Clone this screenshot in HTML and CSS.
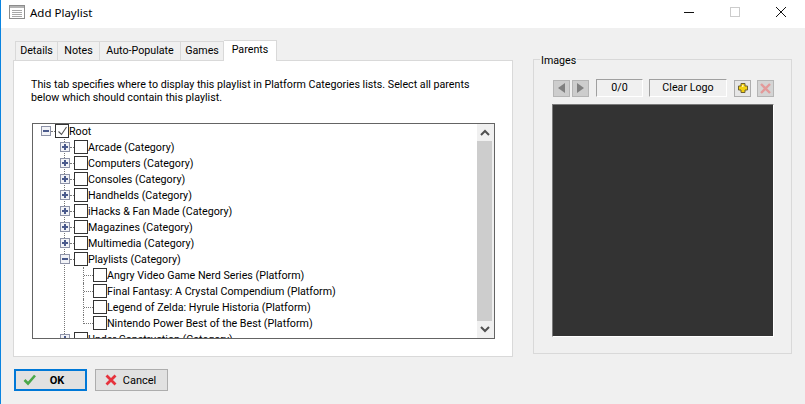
FILE: index.html
```html
<!DOCTYPE html>
<html lang="en">
<head>
<meta charset="utf-8">
<title>Add Playlist</title>
<link rel="stylesheet" href="styles.css">
</head>
<body>
<div class="window">
  <header class="titlebar">
    <svg class="app-icon" width="16" height="14" viewBox="0 0 16 14"><rect x="0.5" y="0.5" width="15" height="13" fill="#fff" stroke="#8c8c8c"/><rect x="1" y="1" width="14" height="2" fill="#b4b4b4"/><path d="M3 5.5h10M3 7.5h10M3 9.5h10M3 11.5h10" stroke="#a8a8a8"/></svg>
    <span class="title">Add Playlist</span>
    <div class="caption">
      <svg class="cap-btn" width="46" height="28" viewBox="0 0 46 28"><path d="M18 12.5h10" stroke="#111"/></svg>
      <svg class="cap-btn" width="46" height="28" viewBox="0 0 46 28"><rect x="18.500" y="7.500" width="9" height="9" fill="none" stroke="#ccc"/></svg>
      <svg class="cap-btn" width="46" height="28" viewBox="0 0 46 28"><path d="M18 7l10 10M28 7l-10 10" stroke="#111" fill="none"/></svg>
    </div>
  </header>
  <main class="content">
    <div class="columns">
      <section class="tabs">
        <nav class="tabstrip">
          <span class="tab t-details">Details</span>
          <span class="tab t-notes">Notes</span>
          <span class="tab t-auto">Auto-Populate</span>
          <span class="tab t-games">Games</span>
          <span class="tab active">Parents</span>
        </nav>
        <div class="panel">
          <p class="intro">This tab specifies where to display this playlist in Platform Categories lists. Select all parents<br>below which should contain this playlist.</p>
          <div class="treebox">
            <div class="tree">
              <div class="row l0"><span class="exp minus"></span><span class="chk checked"><svg width="11" height="11" viewBox="0 0 11 11"><path d="M1.500 5.500l3 3 5-7.500" fill="none" stroke="#555" stroke-width="1.100"/></svg></span><span class="lbl">Root</span></div>
              <div class="row l1"><span class="exp plus"></span><span class="chk"></span><span class="lbl">Arcade (Category)</span></div>
              <div class="row l1"><span class="exp plus"></span><span class="chk"></span><span class="lbl">Computers (Category)</span></div>
              <div class="row l1"><span class="exp plus"></span><span class="chk"></span><span class="lbl">Consoles (Category)</span></div>
              <div class="row l1"><span class="exp plus"></span><span class="chk"></span><span class="lbl">Handhelds (Category)</span></div>
              <div class="row l1"><span class="exp plus"></span><span class="chk"></span><span class="lbl">iHacks &amp; Fan Made (Category)</span></div>
              <div class="row l1"><span class="exp plus"></span><span class="chk"></span><span class="lbl">Magazines (Category)</span></div>
              <div class="row l1"><span class="exp plus"></span><span class="chk"></span><span class="lbl">Multimedia (Category)</span></div>
              <div class="row l1"><span class="exp minus"></span><span class="chk"></span><span class="lbl">Playlists (Category)</span></div>
              <div class="row l2"><span class="chk"></span><span class="lbl">Angry Video Game Nerd Series (Platform)</span></div>
              <div class="row l2"><span class="chk"></span><span class="lbl">Final Fantasy: A Crystal Compendium (Platform)</span></div>
              <div class="row l2"><span class="chk"></span><span class="lbl">Legend of Zelda: Hyrule Historia (Platform)</span></div>
              <div class="row l2 last"><span class="chk"></span><span class="lbl">Nintendo Power Best of the Best (Platform)</span></div>
              <div class="row l1 peek"><span class="exp plus"></span><span class="chk"></span><span class="lbl">Under Construction (Category)</span></div>
            </div>
            <div class="scrollbar">
              <svg class="sb-arrow" width="16" height="17" viewBox="0 0 16 17"><path d="M4 11l4-4 4 4" fill="none" stroke="#505050" stroke-width="2"/></svg>
              <div class="thumb"></div>
              <svg class="sb-arrow" width="16" height="17" viewBox="0 0 16 17"><path d="M4 6l4 4 4-4" fill="none" stroke="#505050" stroke-width="2"/></svg>
            </div>
          </div>
        </div>
      </section>
      <section class="images">
        <span class="legend">Images</span>
        <div class="toolbar">
          <span class="tool off"><svg width="9" height="10" viewBox="0 0 9 10"><path d="M8 0v10L1 5z" fill="#808080"/></svg></span>
          <span class="tool off next"><svg width="9" height="10" viewBox="0 0 9 10"><path d="M1 0v10l7-5z" fill="#808080"/></svg></span>
          <span class="field count">0/0</span>
          <span class="field kind">Clear Logo</span>
          <span class="tool on"><svg width="10" height="10" viewBox="0 0 10 10"><path d="M3 0.500h4v2.500h2.500v4H7v2.500H3V7H0.500V3H3z" fill="#f3d10f" stroke="#6e6130"/><path d="M4 2h1.500v2H4z" fill="#fff6b0"/></svg></span>
          <span class="tool off del"><svg width="13" height="13" viewBox="0 0 13 13"><path d="M2 2l9 9M11 2l-9 9" stroke="#e39a9a" stroke-width="2.400"/></svg></span>
        </div>
        <div class="viewer"></div>
      </section>
    </div>
    <footer class="actions">
      <button class="btn default"><svg width="14" height="12" viewBox="0 0 14 12"><path d="M1.500 6l3.500 3.500 7-8" fill="none" stroke="#4aa84a" stroke-width="2.600"/></svg><span>OK</span></button>
      <button class="btn"><svg width="14" height="12" viewBox="0 0 14 12"><path d="M2.500 1.500l9 9M11.500 1.500l-9 9" stroke="#e6323c" stroke-width="2.800"/></svg><span>Cancel</span></button>
    </footer>
  </main>
</div>
</body>
</html>
```
FILE: styles.css
```css
* { box-sizing: border-box; }
html, body { margin: 0; padding: 0; }
body {
  width: 805px;
  height: 404px;
  overflow: hidden;
  font-family: Roboto, "Liberation Sans", Arial, sans-serif;
  font-size: 10.700px;
  color: #000;
  background: #f0f0f0;
}
.window {
  width: 805px;
  height: 404px;
  display: flex;
  flex-direction: column;
  border-left: 1px solid #0a84e0;
}
.titlebar {
  height: 28px;
  flex: none;
  background: #fff;
  display: flex;
  align-items: center;
  padding-left: 8px;
}
.app-icon { margin-right: 5px; margin-top: -4px; }
.title { font-family: "Noto Sans", sans-serif; font-size: 11.500px; margin-top: -4px; }
.caption { margin-left: auto; display: flex; padding-right: 1px; }
.cap-btn { display: block; }
.content { flex: 1; display: flex; flex-direction: column; padding: 12px 13px 0 12px; }
.columns { display: flex; gap: 20px; height: 315px; }
.tabs { width: 500px; display: flex; flex-direction: column; }
.tabstrip { display: flex; height: 20px; padding-left: 2px; align-items: flex-end; position: relative; z-index: 1; }
.tab {
  height: 19px;
  line-height: 18px;
  text-align: center;
  background: #f0f0f0;
  border: 1px solid #d9d9d9;
  border-left-width: 0;
  border-bottom: 0;
}
.tab:first-child { border-left-width: 1px; }
.t-details { width: 43px; }
.t-notes { width: 42px; }
.t-auto { width: 81px; }
.t-games { width: 43px; }
.tab.active {
  width: 53px;
  height: 21px;
  background: #fff;
  border-left-width: 0;
  margin-bottom: -1px;
  line-height: 17px;
}
.panel {
  flex: 1;
  background: #fff;
  border: 1px solid #d9d9d9;
  padding: 17px 18px 17px 17px;
  display: flex;
  flex-direction: column;
}
.intro { margin: 0 0 19px; line-height: 13px; }
.treebox {
  height: 216px;
  width: 463px;
  margin-left: 1px;
  border: 1px solid #646464;
  display: flex;
  background: #fff;
}
.tree { flex: 1; overflow: hidden; position: relative; padding-top: 0; }
.tree > .row:first-child { margin-top: -1px; }
.tree::before {
  content: "";
  position: absolute;
  left: 31px;
  top: 12px;
  height: 210px;
  border-left: 1px dotted #777;
}
.row { height: 16px; display: flex; align-items: center; position: relative; white-space: nowrap; }
.l0 { padding-left: 8px; }
.l1 { padding-left: 27px; }
.l2 { padding-left: 60px; }
.exp {
  width: 10px;
  height: 10px;
  border: 1px solid #8e93a8;
  background: #f2f3f7;
  position: relative;
  margin-right: 4px;
  flex: none;
  z-index: 1;
}
.exp::before { content: ""; position: absolute; left: 1px; top: 3px; width: 6px; height: 2px; background: #4a5a8c; }
.plus::after { content: ""; position: absolute; left: 3px; top: 1px; width: 2px; height: 6px; background: #4a5a8c; }
.chk {
  width: 14px;
  height: 14px;
  border: 1px solid #333;
  background: #fff;
  flex: none;
  display: flex;
  align-items: center;
  justify-content: center;
  position: relative;
  z-index: 1;
}
.row .exp + .chk::before {
  content: "";
  position: absolute;
  left: -5px;
  top: 6px;
  width: 4px;
  border-top: 1px dotted #777;
}
.l2::before {
  content: "";
  position: absolute;
  left: 50px;
  top: 0;
  height: 16px;
  border-left: 1px dotted #777;
}
.l2::after {
  content: "";
  position: absolute;
  left: 51px;
  top: 8px;
  width: 9px;
  border-top: 1px dotted #777;
}
.l2.last::before { height: 9px; }
.scrollbar {
  width: 17px;
  flex: none;
  background: #f0f0f0;
  display: flex;
  flex-direction: column;
}
.sb-arrow { display: block; flex: none; }
.thumb { flex: 1; background: #cdcdcd; width: 15px; }
.images {
  width: 259px;
  height: 295px;
  align-self: flex-end;
  border: 1px solid #d9d9d9;
  position: relative;
  padding: 19px 17px 0 19px;
  margin-bottom: 1px;
}
.legend {
  position: absolute;
  left: 6px;
  top: -6px;
  background: #f0f0f0;
  padding: 0 1px;
  line-height: 13px;
}
.toolbar { display: flex; align-items: center; height: 18px; }
.tool {
  width: 17px;
  height: 17px;
  display: flex;
  align-items: center;
  justify-content: center;
  border: 1px solid #b5b5b5;
  background: #cdcdcd;
}
.tool.next { margin-left: 2px; margin-right: 7px; }
.tool.on { background: #e6e6e6; border-color: #adadad; margin-right: 6px; }
.tool.del { background: #d4d4d4; }
.field {
  height: 18px;
  line-height: 16px;
  text-align: center;
  background: #f0f0f0;
  border: 1px solid;
  border-color: #a0a0a0 #fff #fff #a0a0a0;
}
.count { width: 47px; margin-right: 6px; }
.kind { width: 78px; margin-right: 7px; }
.viewer {
  width: 222px;
  height: 233px;
  margin-top: 7px;
  margin-left: -1px;
  background: #333;
  border: 1px solid;
  border-color: #7a7a7a #fff #fff #7a7a7a;
}
.actions { display: flex; gap: 8px; margin-top: 14px; padding-left: 1px; }
.btn {
  width: 73px;
  height: 22px;
  display: flex;
  align-items: center;
  background: #e1e1e1;
  border: 1px solid #adadad;
  font: inherit;
  font-size: 11px;
  padding: 0 0 0 8px;
  color: #000;
}
.btn span { flex: 1; text-align: center; padding-right: 6px; }
.btn.default { border: 2px solid #0078d7; padding-left: 7px; font-weight: bold; }
.btn.default span { padding-right: 8px; }
```
